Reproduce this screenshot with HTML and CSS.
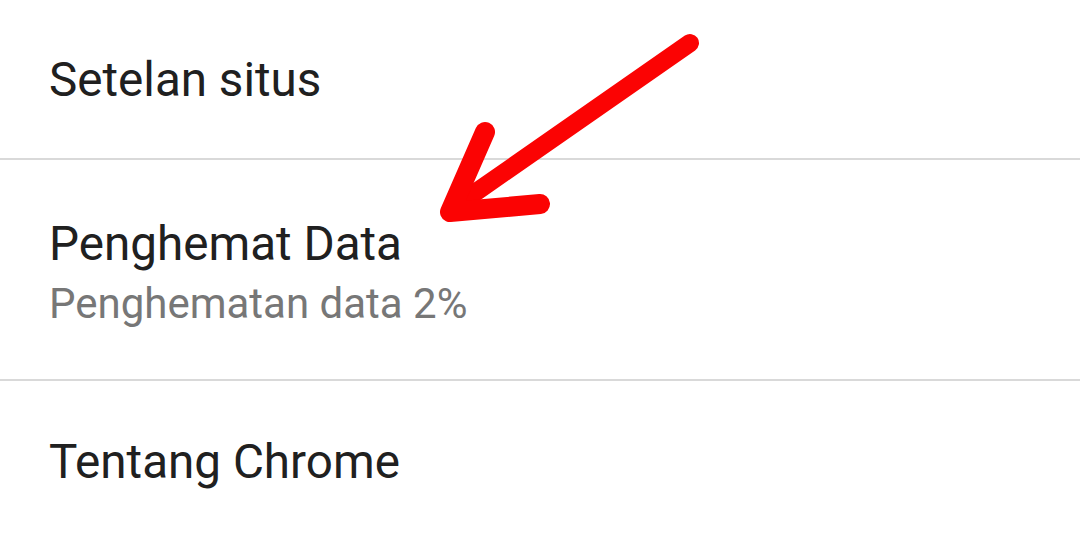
FILE: index.html
```html
<!DOCTYPE html>
<html lang="id">
<head>
  <meta charset="UTF-8">
  <meta name="viewport" content="width=device-width, initial-scale=1.0">
  <title>Setelan</title>
  <link rel="stylesheet" href="styles.css">
</head>
<body>
  <div class="settings">
    <!-- Site settings -->
    <div class="pref pref-first">
      <div class="pref-title">Setelan situs</div>
    </div>

    <!-- Data saver -->
    <div class="pref pref-two-line">
      <div class="pref-title">Penghemat Data</div>
      <div class="pref-summary">Penghematan data 2%</div>
    </div>

    <!-- About -->
    <div class="pref pref-last">
      <div class="pref-title">Tentang Chrome</div>
    </div>

    <!-- Hand-drawn annotation arrow -->
    <svg class="annotation" width="1080" height="542" viewBox="0 0 1080 542">
      <path d="M690 43 L456 206" fill="none" stroke="#fb0303" stroke-width="18" stroke-linecap="round"/>
      <path d="M485 132 L450 212 L540 204" fill="none" stroke="#fb0303" stroke-width="20" stroke-linecap="round" stroke-linejoin="round"/>
    </svg>
  </div>
</body>
</html>
```

FILE: styles.css
```css
/* Base styles */
body {
  margin: 0;
  background: #fff;
  font-family: Roboto, "Noto Sans", sans-serif;
  overflow: hidden;
}

.settings {
  position: relative;
  width: 1080px;
  height: 542px;
}

/* Preference rows */
.pref {
  padding: 0 49px;
  border-bottom: 2px solid #d9d9d9;
}

.pref-first {
  padding-top: 52px;
  padding-bottom: 50px;
}

.pref-two-line {
  padding-top: 56px;
  padding-bottom: 47px;
}

.pref-last {
  padding-top: 53px;
  border-bottom: none;
}

.pref-title {
  font-size: 47.6px;
  line-height: 56px;
  color: #202020;
}

.pref-summary {
  margin-top: 4px;
  font-size: 42px;
  line-height: 56px;
  color: #777;
}

/* Annotation overlay */
.annotation {
  position: absolute;
  top: 0;
  left: 0;
  pointer-events: none;
}
```
